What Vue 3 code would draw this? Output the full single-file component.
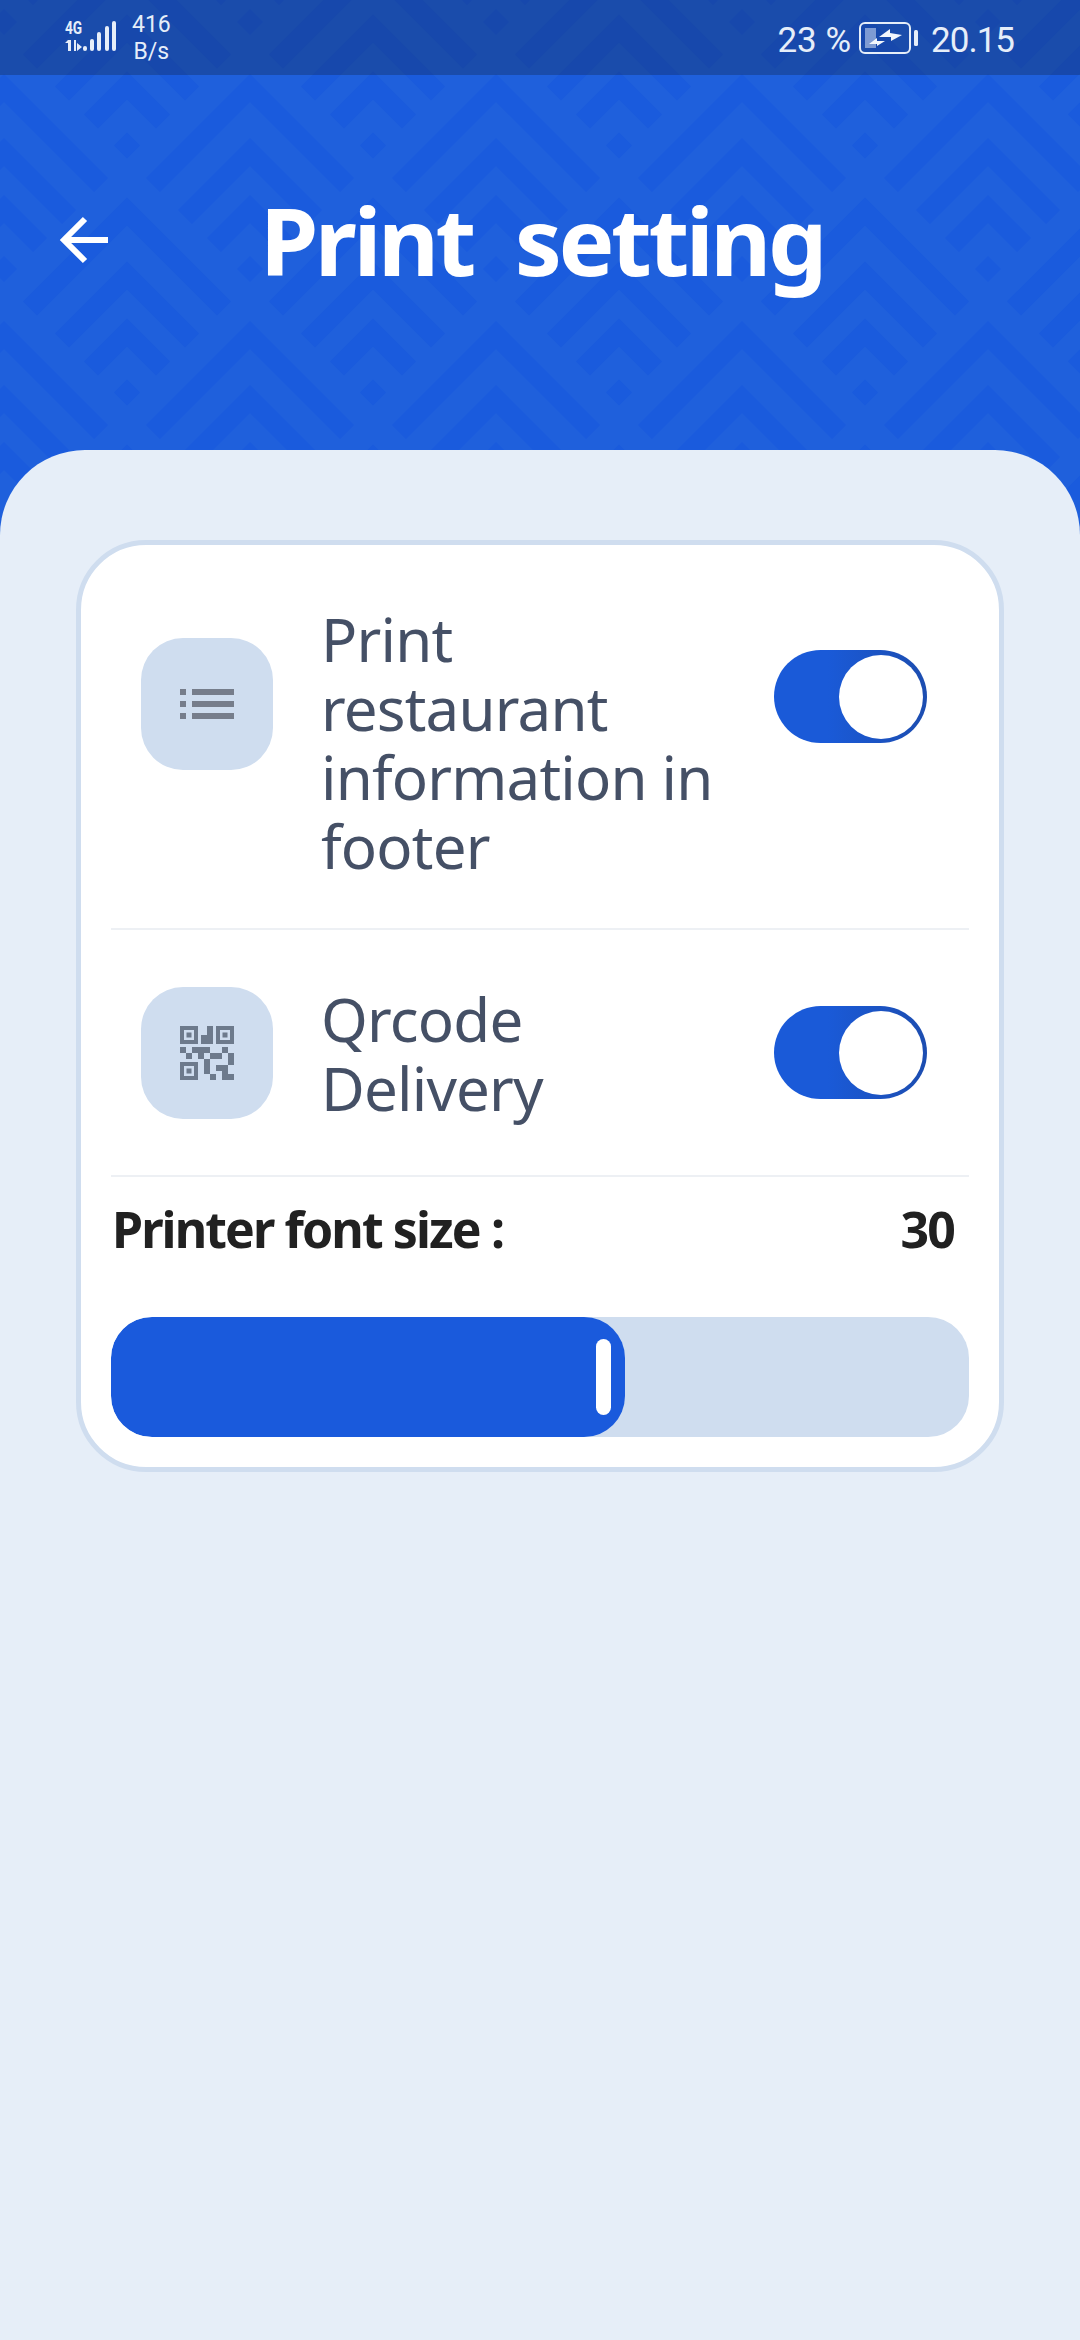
<template>
  <div class="page">
    <div class="hero">
      <svg class="hero-pattern" width="1080" height="500" aria-hidden="true">
        <defs>
          <g id="motif" fill="#1a5bdd">
            <path d="M0 -13 L13 0 L0 13 L-13 0 Z" />
            <path d="M0 -74 L43 -31 L29 -17 L0 -46 L-29 -17 L-43 -31 Z" />
            <path d="M0 -131 L72 -59 L58 -45 L0 -103 L-58 -45 L-72 -59 Z" />
            <path d="M0 -195 L104 -91 L90 -77 L0 -167 L-90 -77 L-104 -91 Z" />
          </g>
        </defs>
        <use v-for="p in motifs" :key="p.key" href="#motif" :x="p.x" :y="p.y" />
      </svg>

      <div class="status-bar">
        <div class="status-left">
          <svg class="signal" width="52" height="34" viewBox="0 0 52 34">
            <text transform="scale(0.72 1)" x="0" y="15" class="signal-label">4G</text>
            <path d="M3 21h3v11H3zM0 24l3-3v3z" fill="#e6eef9" />
            <path d="M9 21h2v11H9zM12 24l5 4-5 4z" fill="#e6eef9" />
            <rect x="18" y="27" width="4" height="5" rx="2" fill="#e6eef9" />
            <rect x="25" y="20" width="4" height="12" rx="2" fill="#e6eef9" />
            <rect x="32" y="13" width="4" height="19" rx="2" fill="#e6eef9" />
            <rect x="40" y="7" width="4" height="25" rx="2" fill="#e6eef9" />
            <rect x="47" y="2" width="4" height="30" rx="2" fill="#e6eef9" />
          </svg>
          <div class="speed">
            <span>416</span>
            <span>B/s</span>
          </div>
        </div>
        <div class="status-right">
          <span>23 %</span>
          <svg class="battery" width="59" height="32" viewBox="0 0 59 32">
            <rect x="1" y="1" width="50" height="30" rx="5" fill="none" stroke="#e6eef9" stroke-width="2" />
            <rect x="6" y="6" width="11" height="20" fill="#e6eef9" fill-opacity="0.5" />
            <path d="M20 15L31 7v4l12 2-11 6v-4z" fill="#f2f6fc" />
            <path d="M10 22l8-6v3h8l-8 5v-2z" fill="#f2f6fc" />
            <rect x="55" y="8" width="4" height="16" rx="1.5" fill="#e6eef9" />
          </svg>
          <span class="clock">20.15</span>
        </div>
      </div>

      <div class="title-bar">
        <svg class="back" width="60" height="60" viewBox="0 0 60 60">
          <path d="M56 30H14M33 9L12 30l21 21" fill="none" stroke="#fff" stroke-width="6" />
        </svg>
        <h1 class="title">{{ title }}</h1>
      </div>
    </div>

    <div class="sheet">
      <div class="card">
        <div class="row row-tall">
          <div class="row-icon">
            <svg width="54" height="30" viewBox="0 0 54 30">
              <g fill="#767d8b">
                <rect x="0" y="0" width="6" height="6" />
                <rect x="12" y="0" width="42" height="6" />
                <rect x="0" y="12" width="6" height="6" />
                <rect x="12" y="12" width="42" height="6" />
                <rect x="0" y="24" width="6" height="6" />
                <rect x="12" y="24" width="42" height="6" />
              </g>
            </svg>
          </div>
          <div class="row-label">Print restaurant information in footer</div>
          <div class="toggle"><span class="knob"></span></div>
        </div>

        <div class="row row-short">
          <div class="row-icon">
            <svg width="54" height="54" viewBox="0 0 54 54">
              <g fill="#6d7a8c">
                <path d="M0 0h18v18H0zM4 4v10h10V4z" fill-rule="evenodd" />
                <rect x="6.5" y="6.5" width="5" height="5" />
                <path d="M36 0h18v18H36zM40 4v10h10V4z" fill-rule="evenodd" />
                <rect x="42.5" y="6.5" width="5" height="5" />
                <path d="M0 36h18v18H0zM4 40v10h10V40z" fill-rule="evenodd" />
                <rect x="6.5" y="42.5" width="5" height="5" />
                <path d="M27 0h6v18H21V9h6z" />
                <rect x="0" y="21" width="6" height="6" />
                <rect x="12" y="21" width="18" height="6" />
                <rect x="42" y="21" width="6" height="6" />
                <rect x="6" y="27" width="6" height="6" />
                <rect x="18" y="27" width="6" height="6" />
                <rect x="30" y="27" width="12" height="6" />
                <rect x="48" y="27" width="6" height="12" />
                <rect x="24" y="33" width="6" height="15" />
                <path d="M36 39h12v9h6v6H42v-9h-6z" />
                <rect x="30" y="48" width="6" height="6" />
              </g>
            </svg>
          </div>
          <div class="row-label">Qrcode Delivery</div>
          <div class="toggle"><span class="knob"></span></div>
        </div>

        <div class="font-size">
          <span>Printer font size :</span>
          <span class="font-size-value">{{ fontSize }}</span>
        </div>

        <div class="slider">
          <div class="slider-fill" :style="{ width: sliderWidth + 'px' }">
            <span class="slider-handle"></span>
          </div>
        </div>
      </div>
    </div>
  </div>
</template>

<script setup>
const title = 'Print\u00a0\u00a0setting'
const fontSize = 30
const sliderWidth = 514

// staggered grid of the chevron background
const motifs = []
for (let row = 0; row < 6; row++) {
  for (let col = -1; col < 7; col++) {
    const x = 4 + col * 246 + (row % 2 ? 123 : 0)
    const y = 22 + row * 123.5
    motifs.push({ key: row + '-' + col, x, y })
  }
}
</script>

<style>
html,
body {
  margin: 0;
  background: #e6eef8;
}
</style>

<style scoped>
.page {
  width: 1080px;
  height: 2340px;
  overflow: hidden;
  font-family: "Noto Sans", sans-serif;
  background: #e6eef8;
}

.hero {
  position: relative;
  height: 540px;
  margin-bottom: -90px;
  background: #1f60dc;
}

.hero-pattern {
  position: absolute;
  top: 0;
  left: 0;
}

.status-bar {
  position: relative;
  display: flex;
  align-items: center;
  justify-content: space-between;
  box-sizing: border-box;
  height: 75px;
  padding: 0 66px 0 65px;
  background: rgba(18, 30, 60, 0.3);
  color: #e6eef9;
  font-family: Roboto, sans-serif;
}

.status-left {
  display: flex;
  align-items: center;
  gap: 15px;
}

.signal {
  margin-top: -3px;
  overflow: visible;
}

.signal-label {
  font-family: Roboto, sans-serif;
  font-size: 19px;
  font-weight: 700;
  fill: #e6eef9;
}

.speed {
  display: flex;
  flex-direction: column;
  align-items: center;
  font-size: 23px;
  line-height: 27px;
}

.status-right {
  display: flex;
  align-items: center;
  gap: 8px;
  font-size: 35px;
}

.status-right span {
  padding-top: 5px;
}

.clock {
  margin-left: 5px;
  letter-spacing: -1px;
}

.title-bar {
  position: relative;
  display: flex;
  align-items: center;
  height: 150px;
  margin-top: 90px;
  padding-left: 52px;
}

.back {
  flex-shrink: 0;
}

.title {
  margin: 0 0 0 148px;
  color: #fff;
  font-size: 94px;
  font-weight: 700;
  line-height: 1;
  letter-spacing: -3.5px;
}

.sheet {
  position: relative;
  box-sizing: border-box;
  height: 1890px;
  padding: 90px 76px 0;
  border-radius: 85px 85px 0 0;
  background: #e6eef8;
}

.card {
  box-sizing: border-box;
  width: 928px;
  height: 932px;
  padding: 0 30px;
  border: 5px solid #cfddef;
  border-radius: 70px;
  background: #fff;
}

.row {
  display: flex;
  box-sizing: border-box;
  border-bottom: 2px solid #edf0f4;
}

.row-tall {
  align-items: flex-start;
  height: 385px;
  padding-top: 60px;
}

.row-short {
  align-items: center;
  height: 247px;
}

.row-short .row-label {
  margin-top: 2px;
}

.row-icon {
  display: flex;
  flex-shrink: 0;
  align-items: center;
  justify-content: center;
  width: 132px;
  height: 132px;
  margin-left: 30px;
  border-radius: 42px;
  background: #cfddef;
}

.row-tall .row-icon {
  margin-top: 33px;
}

.row-label {
  width: 420px;
  margin-left: 48px;
  color: #455066;
  font-size: 60px;
  line-height: 69px;
  letter-spacing: -0.8px;
}

.toggle {
  display: flex;
  flex-shrink: 0;
  justify-content: flex-end;
  align-items: center;
  box-sizing: border-box;
  width: 153px;
  height: 93px;
  margin-left: 33px;
  padding-right: 4px;
  border-radius: 47px;
  background: linear-gradient(90deg, #1a5ad8 35%, #1c4db0 100%);
}

.row-tall .toggle {
  margin-top: 45px;
}

.knob {
  width: 84px;
  height: 84px;
  border-radius: 50%;
  background: #fff;
}

.font-size {
  display: flex;
  justify-content: space-between;
  align-items: center;
  height: 104px;
  padding: 0 15px 0 1px;
  color: #212121;
  font-size: 50px;
  font-weight: 700;
  letter-spacing: -1.9px;
}

.slider {
  height: 120px;
  margin-top: 36px;
  border-radius: 41px;
  background: #cfddef;
  overflow: hidden;
}

.slider-fill {
  display: flex;
  align-items: center;
  justify-content: flex-end;
  box-sizing: border-box;
  height: 100%;
  padding-right: 14px;
  border-radius: 41px;
  background: #1a5adc;
}

.slider-handle {
  width: 15px;
  height: 76px;
  border-radius: 8px;
  background: #fff;
}
</style>
